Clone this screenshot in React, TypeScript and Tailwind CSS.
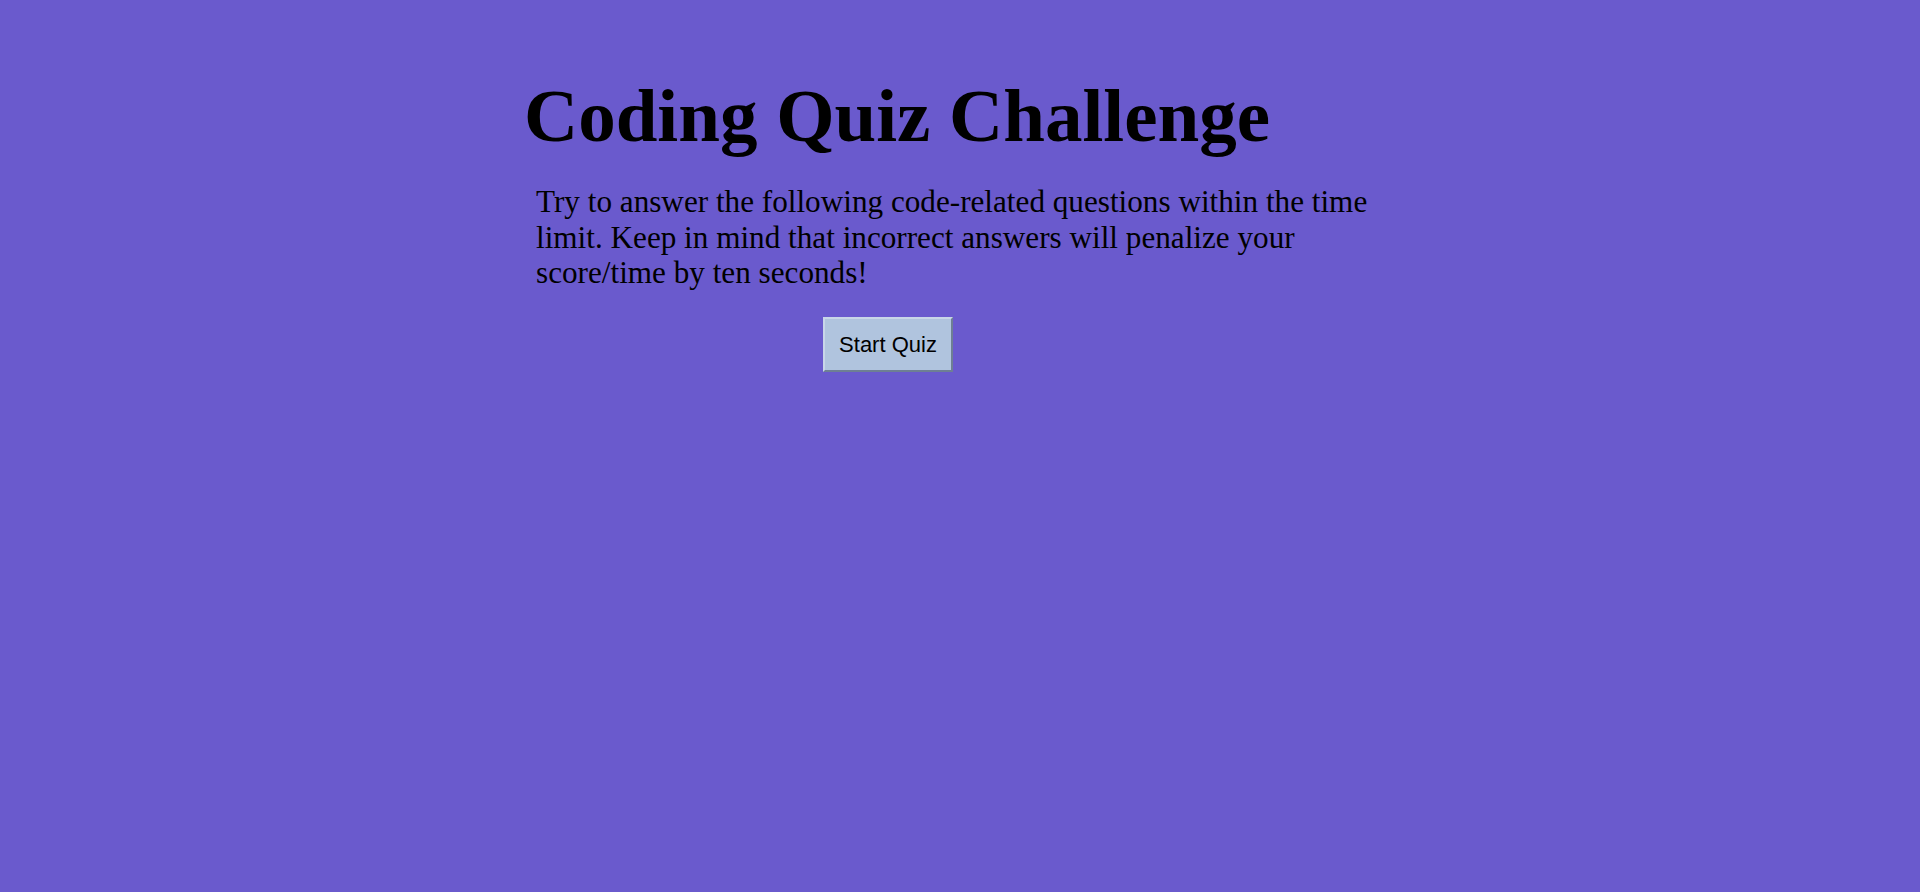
export default function App() {
  return (
    <div className="min-h-screen w-full bg-[#6a5acd] text-black">
      <div className="ml-[524px] pt-[70px]">
        <h1 className="font-['Liberation_Serif',serif] text-[75px] font-bold leading-[92px]">
          Coding Quiz Challenge
        </h1>
        <p className="mt-[22px] ml-[12px] w-[850px] font-['Liberation_Serif',serif] text-[31.2px] leading-[35.5px]">
          Try to answer the following code-related questions within the time
          limit. Keep in mind that incorrect answers will penalize your
          score/time by ten seconds!
        </p>
        <button className="mt-[26px] ml-[299px] h-[55px] w-[130px] border-2 border-b-[#6e7f94] border-l-[#c8d6e8] border-r-[#6e7f94] border-t-[#c8d6e8] bg-[#b0c4de] font-['Liberation_Sans',Arial,sans-serif] text-[22px]">
          Start Quiz
        </button>
      </div>
    </div>
  );
}
